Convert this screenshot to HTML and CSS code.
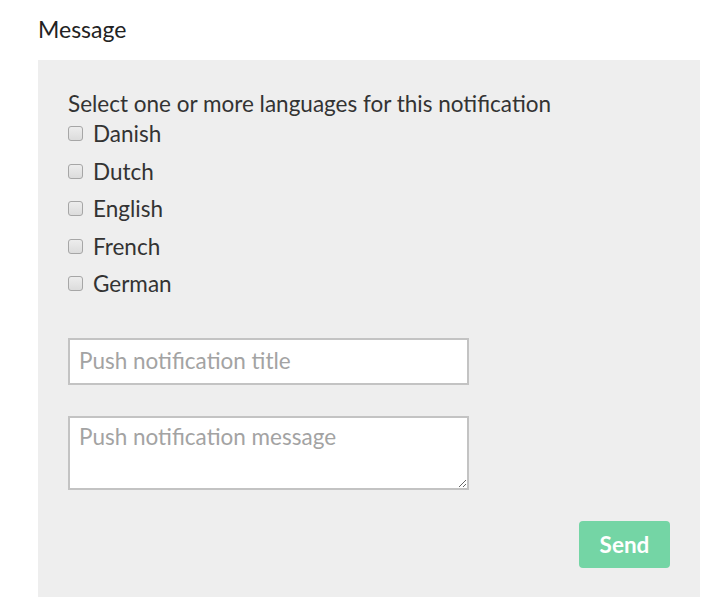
FILE: index.html
```html
<!DOCTYPE html>
<html lang="en">
<head>
    <meta charset="UTF-8">
    <title>Push notification</title>
    <link rel="stylesheet" href="styles.css">
</head>
<body>
    <div class="page">
        <h2 class="section-title">Message</h2>

        <form class="message-panel" onsubmit="return false;">
            <p class="intro">Select one or more languages for this notification</p>

            <div class="language-list">
                <label class="language"><input type="checkbox" name="lang" value="da"> Danish</label>
                <label class="language"><input type="checkbox" name="lang" value="nl"> Dutch</label>
                <label class="language"><input type="checkbox" name="lang" value="en"> English</label>
                <label class="language"><input type="checkbox" name="lang" value="fr"> French</label>
                <label class="language"><input type="checkbox" name="lang" value="de"> German</label>
            </div>

            <input class="field field-title" type="text" placeholder="Push notification title">
            <textarea class="field field-message" placeholder="Push notification message"></textarea>

            <div class="actions">
                <button class="send-btn" type="submit">Send</button>
            </div>
        </form>
    </div>
</body>
</html>
```

FILE: styles.css
```css
* {
    margin: 0;
    padding: 0;
    box-sizing: border-box;
    font-family: 'Lato', 'Liberation Sans', sans-serif;
}

:root {
    --text: #333333;
    --panel-bg: #eeeeee;
    --border: #c3c3c3;
    --placeholder: #a3a3a3;
    --send: #74d5a5;
    --white: #ffffff;
}

body {
    background: var(--white);
    color: var(--text);
}

.page {
    padding: 15px 1px 0 38px;
}

/* Title */
.section-title {
    font-size: 23px;
    font-weight: 400;
    line-height: 28px;
    color: #222222;
    margin-bottom: 17px;
}

/* Panel */
.message-panel {
    background: var(--panel-bg);
    padding: 32px 30px 29px;
    display: flex;
    flex-direction: column;
}

.intro {
    font-size: 22.5px;
    line-height: 24px;
}

.language-list {
    display: flex;
    flex-direction: column;
    margin-top: -1px;
    margin-bottom: 35.5px;
}

.language {
    display: flex;
    align-items: center;
    height: 37.5px;
    font-size: 22.5px;
}

.language input {
    appearance: none;
    -webkit-appearance: none;
    width: 15px;
    height: 15px;
    margin: 0 10px 0 0;
    border: 1px solid #a6a6a6;
    border-radius: 3px;
    background: linear-gradient(#ededed, #dcdcdc);
}

/* Fields */
.field {
    display: block;
    width: 401px;
    border: 2px solid var(--border);
    background: var(--white);
    font-size: 22.5px;
    color: var(--text);
    padding: 0 9px 3px;
    outline: none;
}

.field::placeholder {
    color: var(--placeholder);
}

.field-title {
    height: 47px;
    margin-bottom: 31px;
}

.field-message {
    height: 74px;
    padding: 6px 9px;
    line-height: 26px;
    resize: vertical;
    margin-bottom: 31px;
}

/* Send */
.actions {
    display: flex;
    justify-content: flex-end;
}

.send-btn {
    width: 91px;
    height: 47px;
    background: var(--send);
    color: var(--white);
    border: none;
    border-radius: 4px;
    font-size: 22.5px;
    font-weight: 700;
    cursor: pointer;
}
```
